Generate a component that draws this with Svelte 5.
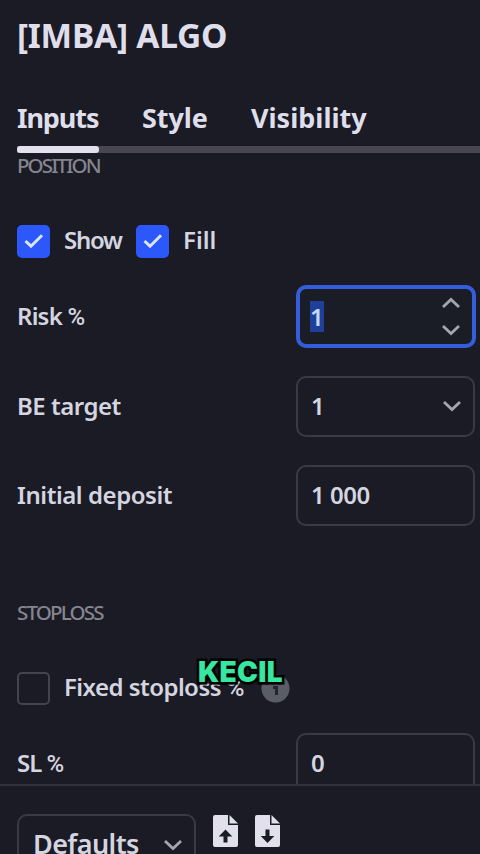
<script lang="ts">
  let activeTab = $state('Inputs');
  let show = $state(true);
  let fill = $state(true);
  let fixedStop = $state(false);

  const tabs = ['Inputs', 'Style', 'Visibility'];
</script>

{#snippet checkbox(checked: boolean)}
  <span class="box" class:checked>
    {#if checked}
      <svg width="20" height="16" viewBox="0 0 20 16"><path d="M1.5 8l5.5 5.2L18 2.2" /></svg>
    {/if}
  </span>
{/snippet}

{#snippet chevron(up: boolean)}
  <svg class="chevron" class:up width="20" height="12" viewBox="0 0 20 12"><path d="M2 2l8 7.5L18 2" /></svg>
{/snippet}

<div class="dialog">
  <header>
    <h1>[IMBA] ALGO</h1>
    <div class="tabs">
      {#each tabs as tab}
        <button class="tab {tab.toLowerCase()}" class:active={activeTab === tab} onclick={() => (activeTab = tab)}>
          <span>{tab}</span>
        </button>
      {/each}
    </div>
  </header>

  <main>
    <h2 class="position">POSITION</h2>

    <div class="checks">
      <button class="check" onclick={() => (show = !show)}>
        {@render checkbox(show)}<span class="text show">Show</span>
      </button>
      <button class="check" onclick={() => (fill = !fill)}>
        {@render checkbox(fill)}<span class="text fill">Fill</span>
      </button>
    </div>

    <div class="row">
      <span class="text risk">Risk <span class="percent">%</span></span>
      <div class="field focused">
        <span class="selected">1</span>
        <span class="spinner">{@render chevron(true)}{@render chevron(false)}</span>
      </div>
    </div>
    <div class="row">
      <span class="text target">BE target</span>
      <div class="field select"><span class="value">1</span>{@render chevron(false)}</div>
    </div>
    <div class="row">
      <span class="text deposit">Initial deposit</span>
      <div class="field"><span class="value">1 000</span></div>
    </div>

    <h2 class="stoploss">STOPLOSS</h2>

    <div class="checks fixed">
      <button class="check" onclick={() => (fixedStop = !fixedStop)}>
        {@render checkbox(fixedStop)}<span class="text stop">Fixed stoploss <span class="percent">%</span></span>
      </button>
      <svg class="info" width="29" height="29" viewBox="0 0 29 29">
        <circle cx="14.5" cy="14.5" r="14" />
        <path d="M12 12h5v9h-3v-6h-2zM13 6h4v4h-4z" />
      </svg>
      <strong class="caption">KECIL</strong>
    </div>

    <div class="row">
      <span class="text sl">SL <span class="percent">%</span></span>
      <div class="field"><span class="value">0</span></div>
    </div>
  </main>

  <footer>
    <div class="field defaults"><span>Defaults</span>{@render chevron(false)}</div>
    {#each ['M12.5 14.5l6.8 7h-4.8v6h-4v-6H5.7z', 'M12.5 28l6.8-7h-4.8v-6.5h-4V21H5.7z'] as arrow}
      <svg class="file" width="25" height="32" viewBox="0 0 25 32">
        <path class="page" d="M2 0h13v10h10v20a2 2 0 0 1-2 2H2a2 2 0 0 1-2-2V2a2 2 0 0 1 2-2z" />
        <path class="page" d="M16.5 0L25 8.5h-8.5z" />
        <path class="arrow" d={arrow} />
      </svg>
    {/each}
  </footer>
</div>

<style>
  :global(body) {
    margin: 0;
    background: #1a1b25;
  }

  .dialog {
    display: flex;
    flex-direction: column;
    height: 854px;
    overflow: hidden;
    background: #1a1b25;
    color: #d5d5e0;
    font-family: 'Noto Sans', 'Open Sans', sans-serif;
    font-size: 24px;
    font-weight: 600;
    white-space: nowrap;
  }

  header {
    flex: none;
  }

  h1 {
    margin: 0;
    padding: 11px 0 0 17px;
    height: 79px;
    box-sizing: border-box;
    color: #dfdeea;
    font-size: 33.5px;
    line-height: 48px;
    font-weight: 700;
    letter-spacing: -0.25px;
  }

  button {
    border: 0;
    padding: 0;
    background: none;
    color: inherit;
    font: inherit;
    cursor: pointer;
  }

  .tabs {
    display: flex;
    gap: 43px;
    height: 74px;
    margin-left: 17px;
    background: linear-gradient(#484651, #484651) 0 100% / 100% 7px no-repeat;
  }

  .tab {
    display: flex;
    flex-direction: column;
    justify-content: space-between;
    text-align: left;
    color: #dfdeea;
    font-size: 27px;
    line-height: 78px;
    font-weight: 700;
    height: 74px;
  }

  .tab span {
    height: 67px;
  }

  .tab.active::after {
    content: '';
    height: 7px;
    border-radius: 3px;
    background: #e3e1ee;
  }

  .inputs {
    width: 82px;
    letter-spacing: -1.1px;
  }

  .style {
    width: 66px;
    letter-spacing: -0.1px;
  }

  .visibility {
    letter-spacing: 0;
  }

  main {
    flex: none;
    height: 631px;
    overflow: hidden;
  }

  h2 {
    margin: 0 0 0 17px;
    color: #85858f;
    font-size: 20.5px;
    line-height: 24px;
    font-weight: 500;
    letter-spacing: -1.9px;
  }

  .checks {
    display: flex;
    align-items: center;
    gap: 14px;
    height: 34px;
    margin: 47px 0 0 17px;
  }

  .check {
    display: flex;
    align-items: center;
    gap: 14px;
    line-height: 34px;
    text-align: left;
  }

  .box {
    display: flex;
    align-items: center;
    justify-content: center;
    box-sizing: border-box;
    width: 33px;
    height: 33px;
    border: 2px solid #43444e;
    border-radius: 5px;
  }

  .box.checked {
    border-color: #2c58fb;
    background: #2c58fb;
  }

  .box path {
    fill: none;
    stroke: #d8e6ff;
    stroke-width: 3;
  }

  .text {
    margin-top: -2px;
  }

  .show {
    width: 58px;
    letter-spacing: -1.3px;
  }

  .risk {
    letter-spacing: -0.8px;
  }

  .target {
    letter-spacing: -0.5px;
  }

  .deposit {
    letter-spacing: -0.45px;
  }

  .sl {
    letter-spacing: -1px;
  }

  .percent {
    font-family: Roboto, sans-serif;
    font-weight: 500;
  }

  .row {
    display: flex;
    align-items: center;
    justify-content: space-between;
    height: 61px;
    margin: 0 5px 28.5px 17px;
  }

  .checks + .row {
    margin-top: 28px;
  }

  .field {
    display: flex;
    align-items: center;
    justify-content: space-between;
    box-sizing: border-box;
    width: 179px;
    height: 61px;
    padding: 0 11px 0 13px;
    border: 2px solid #393a44;
    border-radius: 10px;
  }

  .value {
    margin-top: -2px;
    letter-spacing: -0.5px;
  }

  .focused {
    width: 180px;
    height: 63px;
    margin-right: -1px;
    padding: 0 11px 0 10px;
    border: 4px solid #345ddc;
    background: #1a1d25;
  }

  .selected {
    width: 14px;
    line-height: 31px;
    background: #1e4099;
    color: #c5d8ff;
  }

  .spinner {
    display: flex;
    flex-direction: column;
    gap: 15px;
  }

  .chevron path {
    fill: none;
    stroke: #a5a5af;
    stroke-width: 2.8;
  }

  .up {
    transform: scaleY(-1);
  }

  .stoploss {
    margin-top: 74px;
    letter-spacing: -1.8px;
  }

  .fixed {
    position: relative;
    margin-top: 47px;
  }

  .stop {
    width: 183px;
    letter-spacing: -0.55px;
  }

  .info circle {
    fill: #5b5d66;
  }

  .info path {
    fill: #24252f;
  }

  /* video caption sitting over the dialog */
  .caption {
    position: absolute;
    left: 181px;
    top: -16px;
    color: #36e6a1;
    font-family: Inter, sans-serif;
    font-size: 28px;
    line-height: 34px;
    font-weight: 900;
    letter-spacing: 0.3px;
    -webkit-text-stroke: 5px #000;
    paint-order: stroke fill;
    text-shadow: 1px 2px 2px #000;
  }

  footer {
    display: flex;
    flex: 1;
    align-items: flex-start;
    padding: 28px 0 0 17px;
    border-top: 2px solid #30313c;
  }

  .defaults {
    padding-left: 14px;
    margin-right: 17px;
    flex: none;
    font-size: 27px;
    letter-spacing: -0.6px;
  }

  .defaults span {
    margin-top: -2px;
  }

  .file {
    flex: none;
    margin: 1px 17px 0 0;
  }

  .page {
    fill: #e1e0ec;
  }

  .arrow {
    fill: #1a1b25;
  }
</style>
